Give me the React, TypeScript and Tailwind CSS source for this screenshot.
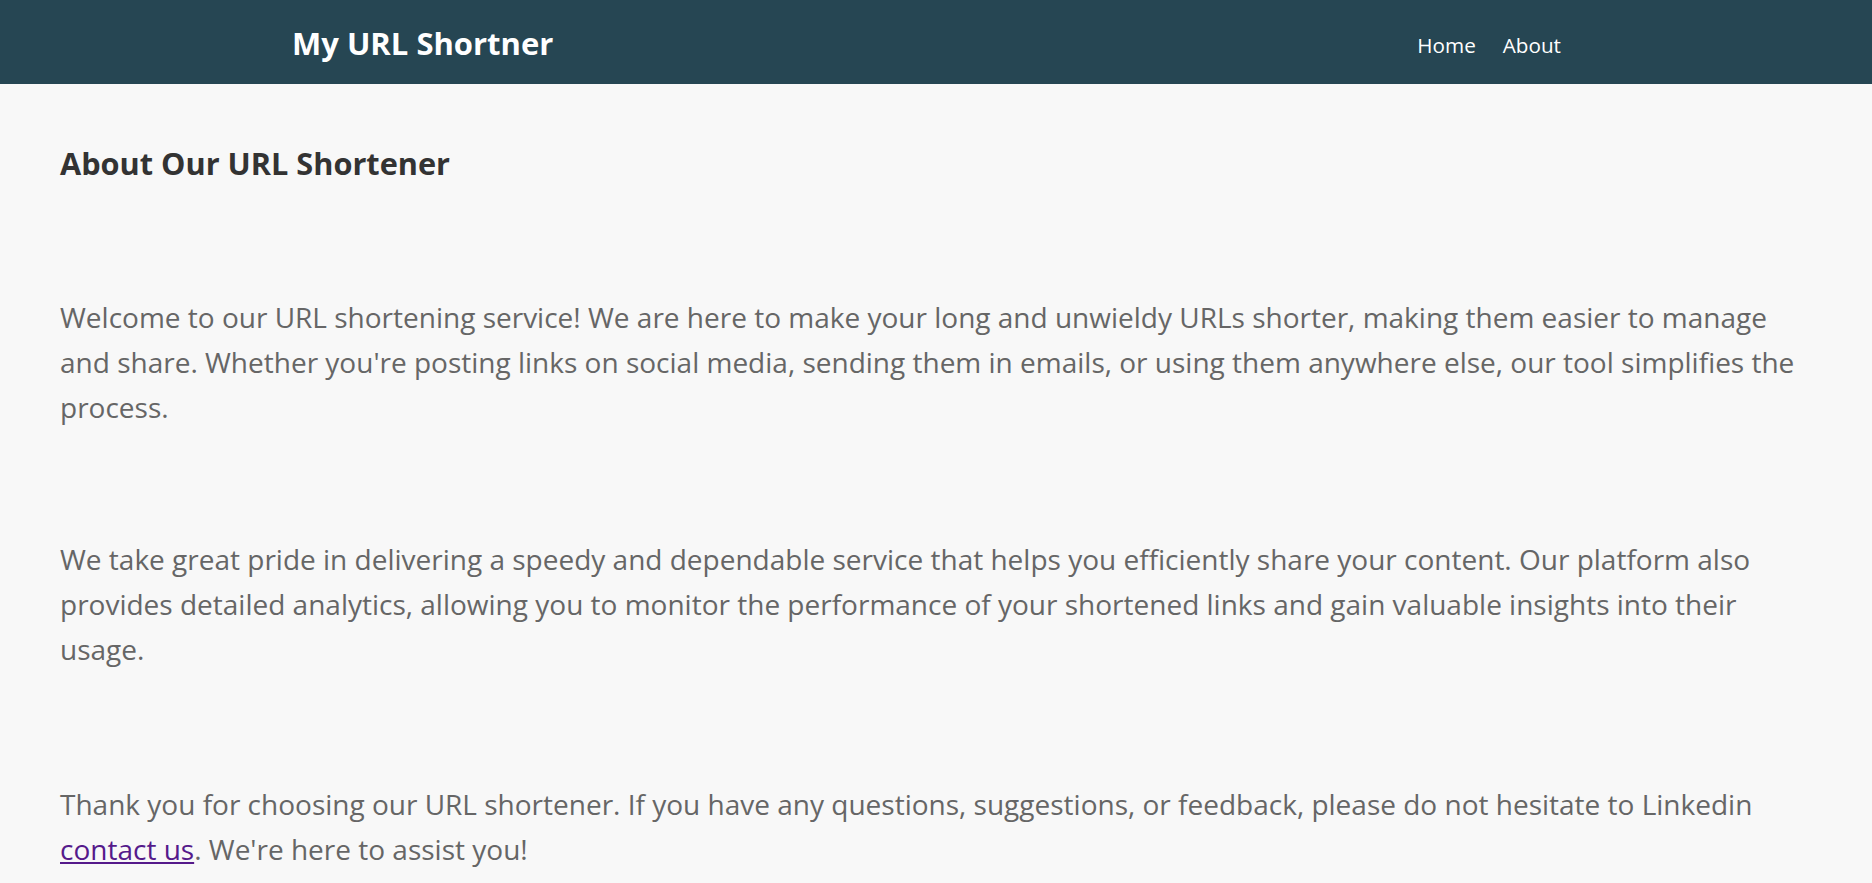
import React from "react";

export default function App() {
  const font = { fontFamily: '"Open Sans", "Noto Sans", sans-serif' };
  return (
    <div className="min-h-[883px] bg-[#f8f8f8]" style={font}>
      <header className="flex h-[84px] items-center justify-between bg-[#264653] pl-[292px] pr-[311px]">
        <h1 className="pt-[3px] text-[31px] font-bold leading-none text-white">My URL Shortner</h1>
        <nav className="flex items-center gap-[27px] pt-[8px] text-[20.7px] text-white">
          <a href="#">Home</a>
          <a href="#">About</a>
        </nav>
      </header>
      <main className="px-[60px] pt-[61px]">
        <h2 className="text-[30.7px] font-bold leading-[36px] text-[#333333]">About Our URL Shortener</h2>
        <p className="mt-[114px] text-[28px] leading-[44.8px] text-[#666666]">
          Welcome to our URL shortening service! We are here to make your long and unwieldy URLs shorter, making them easier to manage and share. Whether you're posting links on social media, sending them in emails, or using them anywhere else, our tool simplifies the process.
        </p>
        <p className="mt-[108px] text-[28px] leading-[44.8px] text-[#666666]">
          We take great pride in delivering a speedy and dependable service that helps you efficiently share your content. Our platform also provides detailed analytics, allowing you to monitor the performance of your shortened links and gain valuable insights into their usage.
        </p>
        <p className="mt-[110px] text-[28px] leading-[44.8px] text-[#666666]">
          Thank you for choosing our URL shortener. If you have any questions, suggestions, or feedback, please do not hesitate to Linkedin{" "}
          <a href="#" className="text-[#551a8b] underline">contact us</a>. We're here to assist you!
        </p>
      </main>
    </div>
  );
}
